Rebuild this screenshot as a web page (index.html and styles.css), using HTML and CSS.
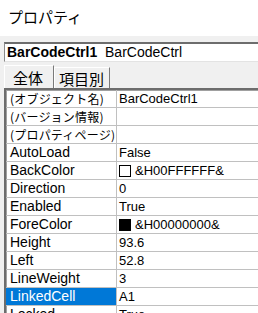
FILE: index.html
```html
<!DOCTYPE html>
<html lang="ja">
<head>
<meta charset="utf-8">
<link rel="stylesheet" href="styles.css">
</head>
<body>
<div class="title">プロパティ</div>
<div class="panel">
  <div class="combo"><b>BarCodeCtrl1</b>&nbsp; BarCodeCtrl</div>
  <div class="tabs">
    <div class="tab active">全体</div>
    <div class="tab">項目別</div>
  </div>
  <div class="grid">
    <div class="row"><div class="k jp">(オブジェクト名)</div><div class="v">BarCodeCtrl1</div></div>
    <div class="row"><div class="k jp">(バージョン情報)</div><div class="v"></div></div>
    <div class="row"><div class="k jp">(プロパティページ)</div><div class="v"></div></div>
    <div class="row"><div class="k">AutoLoad</div><div class="v">False</div></div>
    <div class="row"><div class="k">BackColor</div><div class="v"><span class="sw white"></span>&amp;H00FFFFFF&amp;</div></div>
    <div class="row"><div class="k">Direction</div><div class="v">0</div></div>
    <div class="row"><div class="k">Enabled</div><div class="v">True</div></div>
    <div class="row"><div class="k">ForeColor</div><div class="v"><span class="sw black"></span>&amp;H00000000&amp;</div></div>
    <div class="row"><div class="k">Height</div><div class="v">93.6</div></div>
    <div class="row"><div class="k">Left</div><div class="v">52.8</div></div>
    <div class="row"><div class="k">LineWeight</div><div class="v">3</div></div>
    <div class="row sel"><div class="k">LinkedCell</div><div class="v">A1</div></div>
    <div class="row"><div class="k">Locked</div><div class="v">True</div></div>
  </div>
</div>
</body>
</html>
```
FILE: styles.css
```css
html, body {
  margin: 0;
  padding: 0;
}
body {
  width: 258px;
  height: 313px;
  overflow: hidden;
  background: #ffffff;
  font-family: "Liberation Sans", "Noto Sans CJK JP", sans-serif;
  color: #000;
}
.title {
  height: 36px;
  padding-left: 8px;
  font-family: "Noto Sans CJK JP", sans-serif;
  font-size: 15px;
  line-height: 34px;
  background: #fff;
}
.panel {
  background: #f0f0f0;
  padding: 6px 0 0 4px;
  height: 300px;
}
.combo {
  height: 17px;
  border-top: 2px solid #6d6d6d;
  border-left: 1px solid #8a8a8a;
  border-bottom: 1px solid #e3e3e3;
  background: #fff;
  font-size: 14px;
  line-height: 17px;
  padding-left: 2px;
  white-space: nowrap;
  overflow: hidden;
}
.combo b {
  font-weight: bold;
}
.tabs {
  display: flex;
  margin-top: 3px;
  height: 23px;
  align-items: flex-end;
}
.tab {
  font-family: "Noto Sans CJK JP", sans-serif;
  font-size: 15px;
  height: 21px;
  line-height: 21px;
  border-top: 1px solid #fff;
  border-left: 1px solid #fff;
  border-right: 1px solid #7a7a7a;
  box-sizing: border-box;
  white-space: nowrap;
}
.tab.active {
  width: 50px;
  height: 23px;
  line-height: 23px;
  padding-left: 8px;
}
.tab:not(.active) {
  width: 56px;
  padding-left: 4px;
}
.grid {
  border-top: 2px solid #6d6d6d;
  border-left: 2px solid #6d6d6d;
  background: #fff;
  box-shadow: inset 1px 1px 0 #a0a0a0;
}
.row {
  display: grid;
  grid-template-columns: 111px 1fr;
  height: 18px;
  border-bottom: 1px solid #c0c0c0;
  box-sizing: border-box;
  font-size: 13px;
  line-height: 17px;
  white-space: nowrap;
}
.k {
  padding-left: 4px;
  border-right: 1px solid #c0c0c0;
  overflow: hidden;
  font-size: 14px;
}
.k.jp {
  font-family: "Noto Sans CJK JP", sans-serif;
  font-size: 12px;
  letter-spacing: 0.2px;
}
.v {
  padding-left: 2px;
  display: flex;
  align-items: center;
  overflow: hidden;
}
.sw {
  width: 10px;
  height: 10px;
  border: 1px solid #000;
  margin-right: 4px;
  flex: none;
}
.sw.white { background: #fff; }
.sw.black { background: #000; }
.row.sel .k {
  background: #0078d7;
  color: #fff;
}
```
